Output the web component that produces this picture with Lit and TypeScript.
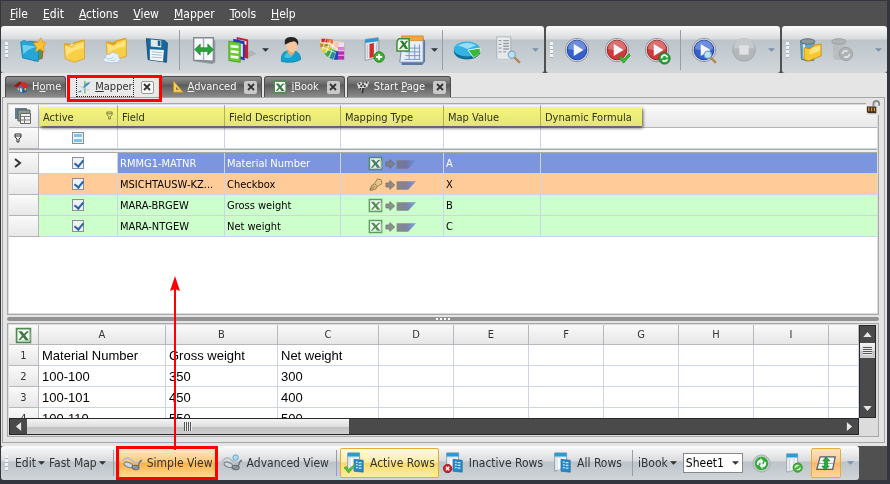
import { LitElement, html, css, svg, nothing } from "lit";
import { customElement, property } from "lit/decorators.js";
import { classMap } from "lit/directives/class-map.js";

const excelMark = svg`
  <path d="M1.500 1.500h13v13h-13z" fill="#fff" stroke="#4f8a50" stroke-width="1.600"/>
  <path d="M11 5h3v8h-8" fill="none" stroke="#b5cfb5"/>
  <path d="M3 4h3.500l2 2.600L11 4h2L9.600 8l3.600 4.500H9.800L7.600 9.600 5 12.500H3L6.500 8.200z" fill="#3d7c40"/>`;

const cover = svg`
  <path d="M9 5h14v18H9z" fill="#f2f5f7" stroke="#9aa3ab"/>
  <path d="M7 4l15-2v22l-15 4z" fill="#e3e8ec" stroke="#8f989f"/>
  <path d="M7 4l15-2v4L7 8z" fill="#2f97d0"/>`;

const rowsIcon = svg`
  <path d="M4 1h13v15l-13 5z" fill="#e9eef2" stroke="#8c99a3"/>
  <path d="M4 1h13v4H4z" fill="#2a9bd6"/>
  <path d="M7 6h3v13l-3 1z" fill="#fff" stroke="#bcc5cb" stroke-width=".5"/>
  <path d="M11 8l10 1v13l-10-1z" fill="#2588c8" stroke="#1b6da6" stroke-width=".7"/>
  <path d="M13 11h2M16 11.500h3M13 14h2M16 14.500h3M13 17h2M16 17.500h3" stroke="#c9ecff" stroke-width="1.400"/>`;

const ball = (fill: string, rim: string) => svg`
  <circle cx="16" cy="16" r="12.500" fill="#d7dbe2" stroke="#8e949d"/>
  <circle cx="16" cy="16" r="10.500" fill="${fill}" stroke="${rim}"/>
  <path d="M6.500 15a9.500 9.500 0 0 1 19 0q-9 3-19 0z" fill="#fff" opacity=".28"/>
  <path d="M12.500 9.500v13L23 16z" fill="#f4f6fb"/>`;

const lens = svg`
  <path d="M23 24l5 5" stroke="#b88550" stroke-width="2.600" stroke-linecap="round"/>
  <circle cx="20" cy="21" r="3.800" fill="#b9e0f5" stroke="#7ca6c0" stroke-width="1.200"/>`;

const glasses = svg`
  <path d="M1 8q4-5 8-3l7 5 7-2" fill="none" stroke="#b9bec2" stroke-width="2"/>
  <path d="M23 7q-3 1-4 7" fill="none" stroke="#6f757b" stroke-width="1.600"/>
  <ellipse cx="8" cy="12" rx="5" ry="2.600" transform="rotate(22 8 12)" fill="#d3d8dc" stroke="#7d8389" stroke-width="1.200"/>
  <ellipse cx="16" cy="15" rx="4" ry="2.400" transform="rotate(12 16 15)" fill="#8f969c" stroke="#686e74" stroke-width="1.200"/>`;

const icons: Record<string, [string, unknown]> = {
  collection: ["0 0 32 32", svg`
    <path d="M14 6l15 1-2 19-10 3z" fill="#c0562c"/><path d="M10 6l16 1v18l-8 4z" fill="#49a04b"/>
    <path d="M2 7l4-2 4 2 3-1 10 3-1 20L4 25z" fill="#25a5d8" stroke="#1580b2"/>
    <path d="M4 10l17 2q-10 2-16 9z" fill="#8fe2f7" opacity=".7"/>
    <path d="M25 2l2 5 4 1-3 4 1 6-5-3-5 3 1-6-4-4 6-1z" fill="#fdc22d" stroke="#e59012" stroke-width=".7"/>`],
  folder: ["0 0 32 32", svg`
    <path d="M5 8l8 1 3-2 11-3v21l-12 4z" fill="#e2a51a"/>
    <path d="M8 11l18-5v6L12 15z" fill="#fff6cd"/>
    <path d="M5 9l8 3 2-1 2-3 11-3v21l-12 4L6 26z" fill="#f9cf45" stroke="#d49a1c" stroke-width=".8"/>
    <path d="M6 11l8 3 3-3 10-4v7q-12 1-20 9z" fill="#fff0a0" opacity=".6"/>`],
  cloudFolder: ["0 0 32 32", svg`
    <path d="M6 6l8 1 3-2 11-3v19l-12 4z" fill="#e2a51a"/>
    <path d="M6 7l8 3 2-1 2-3 11-3v20l-12 4L7 23z" fill="#f9cf45" stroke="#d49a1c" stroke-width=".8"/>
    <path d="M7 9l8 3 3-3 10-4v7q-12 1-20 8z" fill="#fff0a0" opacity=".6"/>
    <path d="M4 29q-3-3 1-4 0-5 5-4 3-4 7-1 4 0 3 4 4 3-1 6-8 2-15-1z" fill="#e6f1fa" stroke="#a9c6dc"/>
    <path d="M6 25q4 3 8-1M11 28q4 1 6-2" fill="none" stroke="#a9c6dc"/>`],
  save: ["0 0 32 32", svg`
    <path d="M5 3l21 2 3 3-1 22L7 27z" fill="#17679f" stroke="#0f4b78"/>
    <path d="M10 4l12 1v8l-12-1z" fill="#dfe9f0"/><path d="M18 5l3 .3v6l-3-.3z" fill="#1b5f90"/>
    <path d="M9 15l16 1-1 13-15-2z" fill="#f5f8fa"/><path d="M11 18l12 1M11 21l12 1M11 24l12 1" stroke="#9db3c2"/>`],
  swap: ["0 0 32 32", svg`
    <path d="M5 4h20l3 2v23l-3 2-20-3z" fill="#8c969d"/>
    <path d="M5 3h21v25l-21-1z" fill="#f8f9fa" stroke="#818b92" stroke-width="1.500"/><path d="M15.500 3v24" stroke="#a7afb5" stroke-width="1.500"/>
    <path d="M6 15.500l6-6v4h8v-4l6 6-6 6v-4h-8v4z" fill="#29a33a" stroke="#12762a" stroke-width=".6"/>`],
  lists: ["0 0 34 32", svg`
    <path d="M18 28l16-8-8-4z" fill="#9ea7ad" opacity=".6"/>
    <path d="M11 1l13 3v22l-13-4z" fill="#c3222d"/><path d="M13 4l9 2v4l-9-2z" fill="#fff"/>
    <path d="M7 3l13 3v22L7 24z" fill="#2b35bd"/><path d="M9 7l9 2v15l-9-2z" fill="#dfe2ff"/>
    <path d="M2 6l13 2v22L2 28z" fill="#6ecb37" stroke="#3f9e1b"/>
    <path d="M4 10l9 1v3l-9-1zM4 16l9 1v3l-9-1zM4 22l9 1v3l-9-1z" fill="#f3fff0"/>`],
  person: ["0 0 32 32", svg`
    <path d="M5 29q-1-11 7-12h8q7 2 7 10-9 5-22 2z" fill="#12a1cc" stroke="#0e7ba3" stroke-width=".8"/>
    <path d="M12 15v4l4 4 4-4v-4z" fill="#e7a877"/><path d="M10 7q0-4 7-4t6 6q0 9-6 10-6-2-7-12z" fill="#f6c79c"/>
    <path d="M9 10Q7 1 16 1q10 0 8 10-2-5-5-5-5 1-10 4z" fill="#26221f"/>
    <path d="M8 24q2-5 5-5l3 4 4-4q-4 9-12 5z" fill="#6fd7ef" opacity=".6"/>`],
  swatches: ["0 0 32 32", svg`
    <path d="M2 10l4 8 7 7 8 2 9-1V7L16 5 3 3z" fill="#e8d9b0"/>
    <path d="M4 3l6 0 1 4-7 0z" fill="#d11f1b"/><path d="M10 3l7 1 1 5-7-2z" fill="#ef6c2d"/>
    <path d="M2 8h9l3 3-11 2z" fill="#b98f2b"/><path d="M3 14l10-2 3 2-10 5z" fill="#d8ce2a"/>
    <path d="M7 20l9-6 2 2-7 8z" fill="#3fa63c"/><path d="M12 24l6-8 3 1-4 10z" fill="#1f8f9a"/>
    <path d="M18 27l3-10 3 0-1 10z" fill="#2743b5"/><path d="M23 8h7v19h-7z" fill="#b32cb4"/>
    <path d="M17 5l6 3v6l-6-3z" fill="#f5c2b5"/><path d="M23 8h7v5h-7z" fill="#f4dcf4"/><path d="M23 13h7v4h-7z" fill="#d988da"/>
    <path d="M3 8l11 1 9 7M5 13l15 6M9 3l-4 13M14 5l-5 15M19 7l-6 17M23 17h7M23 22h7" stroke="#fff" stroke-width=".8" fill="none"/>`],
  sheetAdd: ["0 0 32 32", svg`${cover}
    <path d="M12 9l5-1v16l-5 1z" fill="#cf2e2c"/><path d="M9.500 10v15M20 8v14" stroke="#b6bfc5"/>
    <circle cx="23" cy="24" r="6" fill="#3cb02f" stroke="#25801c"/><path d="M23 20.500v7M19.500 24h7" stroke="#fff" stroke-width="2.200"/>`],
  excelCal: ["0 0 32 32", svg`
    <path d="M7 4h22l2 2v22l-3 4H6z" fill="#5b78a5"/><path d="M7 4h22v25H4z" fill="#e7effa" stroke="#7189b0"/>
    <path d="M6 1h23v5H6z" fill="#f3a73a" stroke="#c77c1c" stroke-width=".7"/>
    <path d="M12 14h14M10 18h16M10 22h16M9 26h17M14 18v8M20 10v16M25 10v16" stroke="#7393c7"/>
    <path d="M3 4h11v13H1V7z" fill="#f7fbf6" stroke="#3f8a3c" stroke-width="1.600"/>
    <path d="M4 6h3l2 2.500L11 6h2l-3 4 3 5h-3l-2-3L5 15H3l4-5z" fill="#2c7d2d"/>`],
  pie: ["0 0 32 32", svg`
    <path d="M2 15v4q3 7 14 7t14-7v-4z" fill="#0d6f9e"/><ellipse cx="16" cy="15" rx="14" ry="8" fill="#34b2e2"/>
    <path d="M5 12q10-7 21-1l-10 4q-7-4-11-3z" fill="#aee9fb" opacity=".8"/>
    <path d="M17 16l13-2q2 6-7 10z" fill="#33b83a" stroke="#eafbea"/><path d="M23 24q6-3 7-7v3l-7 5z" fill="#1d8a26"/>`],
  preview: ["0 0 32 32", svg`
    <g opacity=".75"><path d="M4 2h15v24H4z" fill="#f1f3f4" stroke="#9ca4aa"/><path d="M2 26h18v3H2z" fill="#d0d5d8"/>
    <path d="M6 6h3M6 10h3M6 14h3M6 18h3M11 6h6M11 9h6M11 12h6M11 15h6M11 18h3" stroke="#8d959b" stroke-width="1.500"/></g>${lens}`],
  play: ["0 0 32 32", ball("#3560cf", "#1d3f9c")],
  playCheck: ["0 0 32 32", svg`${ball("#cf3a3a", "#982020")}<path d="M18 24l3-1 2 3 6-6 1 2-7 8z" fill="#3fb836" stroke="#278b20" stroke-width=".8"/>`],
  playLoop: ["0 0 32 32", svg`${ball("#cf3a3a", "#982020")}<circle cx="24" cy="25" r="6" fill="#2ca63a" stroke="#16752a"/><path d="M21 25a3 3 0 0 1 6-1M27 26a3 3 0 0 1-5 1" stroke="#fff" stroke-width="1.800" fill="none"/>`],
  playFind: ["0 0 32 32", svg`${ball("#3560cf", "#1d3f9c")}${lens}`],
  stop: ["0 0 32 32", svg`<circle cx="16" cy="16" r="12" fill="#b4b7ba" stroke="#a2a6a9"/><path d="M5 14a11 11 0 0 1 22 0z" fill="#c6c9cb"/><path d="M11 11h10v10H11z" fill="#dfe1e3"/>`],
  binFolder: ["0 0 28 28", svg`
    <path d="M4 4h15v22q-8 2-14-1z" fill="#5fa9c9" stroke="#5b717d"/><path d="M8 8v16" stroke="#eefaff" stroke-width="2"/>
    <ellipse cx="12" cy="5" rx="8" ry="3" fill="#8b979f" stroke="#5d6971"/>
    <path d="M8 12l6 1 3-1 2-3 8-1v13l-14 6-5-2z" fill="#f8c92f" stroke="#c58f14"/><path d="M14 15l3-3 9-2v5l-12 5z" fill="#fff0a2" opacity=".7"/>`],
  binLoop: ["0 0 28 28", svg`
    <path d="M4 4h14l-1 21q-8 2-12-1z" fill="#b9bdc0"/><ellipse cx="11" cy="5" rx="8" ry="3" fill="#b0b4b7" stroke="#999da0"/>
    <circle cx="19" cy="19" r="7.500" fill="#aeb2b5" stroke="#9b9fa2"/><path d="M15 19q1-5 6-3M23 19q-1 5-6 3" stroke="#e1e3e5" stroke-width="2" fill="none"/>`],
  home: ["0 0 16 16", svg`
    <path d="M3 8l4-3 8 2v6l-6 2-6-3z" fill="#2b7fc6"/>
    <path d="M10 9l5-2v6l-5 2z" fill="#1c5fa0"/><path d="M0 7l6-5 8 1 2 5-5 1-4-3-4 3z" fill="#d8281f"/>
    <path d="M0 7l6-5 3 1-5 5z" fill="#8d1712"/><path d="M4 9h2v3H4zM12 9h2v3h-2z" fill="#f0a832"/><path d="M7 9l2 1v4l-2-1z" fill="#e8edf2"/>`],
  mapper: ["0 0 16 16", svg`<path d="M9 1v14" stroke="#3fae4a" stroke-width="1.200"/><path d="M1 13q4 0 6-5t8-6q-1 4-6 6t-4 5q-2 2-4 0z" fill="#4f93c3"/><path d="M3 7l8 4 3 0" fill="none" stroke="#a6cbe2"/>`],
  ruler: ["0 0 16 16", svg`<path d="M4 1v13h11z" fill="#f6cf55" stroke="#c98d1e"/><path d="M7 8v3h3z" fill="#5f5f5f"/>`],
  excel: ["0 0 16 16", excelMark],
  flag: ["0 0 16 16", svg`<path d="M1 4l4-2 3 2 3-2 4 0-2 6-4 1-2 3-4-2z" fill="#ddd"/><path d="M3 3h2v2H3zM7 4h2v2H7zM11 2h2v2h-2zM5 6h2v2H5zM9 6h2v2H9zM4 9h2v2H4zM7 9l2 0-1 6H7z" fill="#222"/>`],
  glasses: ["0 0 24 20", glasses],
  glassesPlus: ["0 0 24 20", svg`${glasses}<circle cx="16" cy="4" r="3" fill="#a6dcf5" stroke="#5f9dbd"/>`],
  rowsOn: ["0 0 24 24", svg`${rowsIcon}<path d="M0 17l3-1 2 3 6-5 1 1-7 8z" fill="#58c23f" stroke="#35942a" stroke-width=".7"/>`],
  rowsOff: ["0 0 24 24", svg`${rowsIcon}<circle cx="5" cy="18" r="4.500" fill="#d2232a" stroke="#94141a"/><path d="M3.200 16.200l3.600 3.600M6.800 16.200l-3.600 3.600" stroke="#fff" stroke-width="1.500"/>`],
  rows: ["0 0 24 24", rowsIcon],
  refresh: ["0 0 20 20", svg`<circle cx="10" cy="10" r="9" fill="#c5ccc9" stroke="#a3ada8"/><circle cx="10" cy="10" r="7" fill="#35a83e"/><path d="M5 11q0-5 4-5V4l3 4-3 3V9q-2 0-2 3zM15 9q0 5-4 5v2l-3-4 3-3v2q2 0 2-3z" fill="#f2fff2"/>`],
  sheetLoop: ["0 0 24 24", svg`<path d="M4 2h12v17l-12 3z" fill="#eef1f3" stroke="#97a1a8"/><path d="M4 2h12v4H4z" fill="#2a9bd6"/><path d="M7 7v13M12 7v12" stroke="#c5ccd1"/><circle cx="16" cy="17" r="5" fill="#46b93b" stroke="#2a8a23"/><path d="M13 17q1-3 4-2M19 17q-1 3-4 2" stroke="#fff" stroke-width="1.400" fill="none"/>`],
  fit: ["0 0 24 20", svg`<path d="M5 2h18l-3 15H1z" fill="#f4f6f7" stroke="#555d63" stroke-width="1.500"/><path d="M3 10h18" stroke="#8d969c"/><path d="M12 2l5 5h-3v6h2l-5 5-4-5h3V7H8z" fill="#2aa83a" stroke="#137427" stroke-width=".6"/>`],
  grid: ["0 0 18 18", svg`<path d="M1 1h12v11H1z" fill="#697a98"/><path d="M4 3h12v11H4z" fill="#8ba08c" stroke="#55635a"/><path d="M6.500 6.500h10v10h-10z" fill="#f1f1f1" stroke="#666"/><path d="M6 9.500h11M10.500 10v7M7 13h10" stroke="#777"/>`],
  filter: ["0 0 8 10", svg`<path d="M1 1h6v3L5 6v3H3V6L1 4zM1 3h6" fill="none" stroke="currentColor"/>`],
  arrowMap: ["0 0 32 12", svg`<path d="M1 4h4V1.500L10 6l-5 4.500V8H1z" fill="#808080" stroke="#666"/><path d="M12 2h20l-8 9H12z" fill="url(#fade)"/><defs><linearGradient id="fade"><stop offset="0" stop-color="#777"/><stop offset=".5" stop-color="#70709c"/><stop offset="1" stop-color="#6a90e8"/></linearGradient></defs>`],
  pin: ["0 0 16 16", svg`<path d="M2 14l2-5 3-2 3 3-2 3-4 1z" fill="#d3b56f" stroke="#7a6a48"/><path d="M7 7l3-5 4 1 1 4-5 3z" fill="#e2c481" stroke="#857350"/><path d="M2 14l5-4" stroke="#7a6a48"/>`],
  lock: ["0 0 16 16", svg`<path d="M8 7V4q0-3 3-3t3 3v2" fill="none" stroke="#8b8b8b" stroke-width="2"/><path d="M1 7h10v7H3q-2 0-2-2z" fill="#3b2d22"/><path d="M3 8v4M6 8v4M9 8v4" stroke="#e39a33" stroke-width="1.400"/>`],
  left: ["0 0 8 10", svg`<path d="M7 0v10L1 5z" fill="#e6e6e6"/>`],
  right: ["0 0 8 10", svg`<path d="M1 0v10l6-5z" fill="#e6e6e6"/>`],
  up: ["0 0 10 6", svg`<path d="M0 6h10L5 0z" fill="#e6e6e6"/>`],
  down: ["0 0 10 6", svg`<path d="M0 0h10L5 6z" fill="#e6e6e6"/>`],
  caret: ["0 0 8 4", svg`<path d="M0 0h8L4 4z" fill="currentColor"/>`],
  cross: ["0 0 8 8", svg`<path d="M1 1l6 6M7 1L1 7" stroke="currentColor" stroke-width="1.800"/>`],
  current: ["0 0 8 10", svg`<path d="M1 1l5 4-5 4" fill="none" stroke="#333" stroke-width="2"/>`],
};

@customElement("ui-icon")
class UiIcon extends LitElement {
  @property() name = "";
  @property({ type: Number }) size = 16;
  static styles = css`
    :host { display: block; flex: none; }
    svg { display: block; }
  `;
  render() {
    const [box, art] = icons[this.name];
    const [, , w, h] = box.split(" ").map(Number);
    return html`<svg viewBox=${box} width=${this.size} height=${Math.round((this.size * h) / w)} aria-hidden="true">${art}</svg>`;
  }
}

const menu = [["F", "ile"], ["E", "dit"], ["A", "ctions"], ["V", "iew"], ["M", "apper"], ["T", "ools"], ["H", "elp"]];

const tabs = [
  { icon: "home", pre: "H", key: "o", post: "me", close: false },
  { icon: "mapper", pre: "", key: "M", post: "apper", close: true, active: true },
  { icon: "ruler", pre: "", key: "A", post: "dvanced", close: true },
  { icon: "excel", pre: "", key: "i", post: "Book", close: true },
  { icon: "flag", pre: "Start ", key: "P", post: "age", close: true },
];

const mappings = [
  { field: "RMMG1-MATNR", text: "Material Number", source: "excel", value: "A", tone: "selected" },
  { field: "MSICHTAUSW-KZ...", text: "Checkbox", source: "pin", value: "X", tone: "orange" },
  { field: "MARA-BRGEW", text: "Gross weight", source: "excel", value: "B", tone: "green" },
  { field: "MARA-NTGEW", text: "Net weight", source: "excel", value: "C", tone: "green" },
];

const letters = ["A", "B", "C", "D", "E", "F", "G", "H", "I"];
const sheet = [
  ["Material Number", "Gross weight", "Net weight"],
  ["100-100", "350", "300"],
  ["100-101", "450", "400"],
  ["100-110", "550", "500"],
];

@customElement("app-root")
class AppRoot extends LitElement {
  static styles = css`
    * { box-sizing: border-box; }
    :host {
      display: flex; flex-direction: column; min-height: 100vh; box-sizing: border-box;
      padding: 1px 3px 4px 1px; background: #34363f; color: #333;
      font: 11px/14px "DejaVu Sans Condensed", "DejaVu Sans", sans-serif;
    }
    button { font: inherit; color: inherit; border: 0; padding: 0; background: none; display: flex; align-items: center; justify-content: center; flex: none; white-space: nowrap; }
    u { text-underline-offset: 1px; }

    .menu { display: flex; gap: 15px; padding: 0 9px; height: 25px; background: #505050; color: #fff; font-size: 12px; flex: none; }

    .toolbars { display: flex; gap: 2px; background: #505050; flex: none; }
    .toolbar {
      display: flex; align-items: center; height: 47px; padding: 0 4px; border-radius: 3px;
      background: linear-gradient(#fbfbfb 0, #d8dadd 13px, #bcc4cb 14px, #c6cdd2 30px, #d2d7da);
    }
    .toolbar.rest { flex: 1; min-width: 0; }
    .grip { width: 3px; height: 16px; flex: none; background: repeating-linear-gradient(#f0f2f3 0 3px, #aab1b8 3px 4px); margin-right: 4px; }
    .sep { width: 1px; height: 40px; background: #969ea6; flex: none; margin: 0 3px; }
    .tool { width: 41px; height: 40px; }
    .run .tool { width: 40px; }
    .tool.narrow { width: 36px; }
    .rest .tool { width: 32px; }
    .caret { width: 10px; height: 20px; }
    .more { color: #7d8fae; margin-left: 2px; }
    .rest .more { margin-left: auto; }

    .work { flex: 1; display: flex; flex-direction: column; background: #e5e5e5; padding: 3px 2px 3px 1px; }
    .tabs { display: flex; gap: 2px; padding-left: 3px; height: 21px; flex: none; }
    .tab {
      position: relative; display: flex; align-items: center; gap: 4px; padding: 0 4px 0 8px; color: #f4f4f4;
      background: linear-gradient(#8d8d8d, #6a6a6a 7px, #5c5c5c 8px, #8b8b8b);
      border: 1px solid #4c4c4c; border-bottom: 0; border-radius: 3px 3px 0 0;
    }
    .tab.active { background: #e9e9e9; border-color: #e9e9e9; color: #333; }
    .tab.active::after { content: ""; position: absolute; inset: -2px -4px -5px -2px; border: 3px solid #f00; z-index: 2; }
    .name { height: 18px; }
    .active .name { outline: 1px dotted #222; }
    .tab .label { display: flex; align-items: center; gap: 4px; }
    .close { width: 13px; height: 13px; margin-left: 4px; background: #c9c9c9; color: #333; border-radius: 2px; }
    .active .close { background: #f7f7f7; border: 1px solid #999; }

    .frame { flex: 1; display: flex; flex-direction: column; border: 1px solid #a5a5a5; padding: 5px 5px 5px 4px; position: relative; }
    .lock { position: absolute; right: 3px; top: 2px; background: #e5e5e5; }
    .pane { border: 1px solid #a8a8a8; padding: 1px; background: #dcdcdc; }
    .grid { flex: 1; display: flex; }
    .canvas { background: #fff; flex: 1; min-width: 0; position: relative; }
    .mark { position: absolute; top: 2px; left: 31px; width: 602px; height: 19px; background: #fbfb80; mix-blend-mode: multiply; box-shadow: 1px 2px 3px #555; }
    table { border-spacing: 0; table-layout: fixed; width: 100%; }
    th, td { padding: 0; text-align: left; font-weight: normal; overflow: hidden; white-space: nowrap; }
    .map td { height: 21px; padding: 1px 2px 0; border: solid #ccd5e6; border-width: 0 1px 1px 0; color: #000; }
    .map th { height: 23px; padding: 3px 4px 0; border: solid #b4b4b4; border-width: 0 1px 1px 0; background: linear-gradient(#fafafa, #e8e8e8); }
    .map tr > *:last-child { border-right: 0; }
    .map tbody th { height: 21px; padding: 0 5px; }
    .map .gap td { height: 4px; padding: 0; background: #eee; border: solid #aaa; border-width: 1px 0; }
    .map .selected td { background: #7b95de; color: #fff; }
    .map .selected td.tick { background: #fff; }
    .map .tick { padding-top: 0; }
    .orange td { background: #ffcc99; }
    .green td { background: #ccffcc; }
    .map .corner { padding: 0 5px; }
    .split { display: flex; justify-content: space-between; }
    .split ui-icon { color: #777; }
    .flow { display: flex; justify-content: center; align-items: center; gap: 2px; opacity: 0.85; }
    .tick input { appearance: none; display: block; width: 12px; height: 12px; margin: 0 auto; border: 1px solid #8a8f96; background: #eef1f5; position: relative; }
    .tick input:checked::before { content: ""; position: absolute; left: 3px; top: 0; width: 4px; height: 7px; border: solid #2a64ad; border-width: 0 2px 2px 0; transform: rotate(40deg); }
    .tick input:indeterminate::before { content: ""; position: absolute; inset: 1px; background: linear-gradient(#7fc4ee 3px, #e8f7ff 3px 5px, #7fc4ee 5px); }
    .c30 { width: 30px; } .c79 { width: 79px; } .c107 { width: 107px; } .c116 { width: 116px; } .c103 { width: 103px; } .c97 { width: 97px; }
    .c127 { width: 127px; } .c112 { width: 112px; } .c101 { width: 101px; } .c75 { width: 75px; }

    .splitter { height: 4px; margin: 2px 0; background: #939393; display: flex; justify-content: center; align-items: center; flex: none; border-radius: 2px; }
    .splitter::before { content: ""; width: 14px; height: 2px; background: repeating-linear-gradient(90deg, #fff 0 2px, transparent 2px 4px); }

    .book { display: grid; grid-template: 93px 17px / minmax(0, 1fr) 17px; flex: none; padding: 1px 2px 1px 1px; }
    .cells { overflow: hidden; background: #fff; }
    .xls th { height: 20px; padding-top: 1px; text-align: center; border: solid #b8b8b8; border-width: 0 1px 1px 0; background: linear-gradient(#fafafa, #e6e6e6); }
    .xls tbody th { height: 21px; }
    .xls td { height: 21px; padding: 2px 3px 0; border: solid #ccd5e6; border-width: 0 1px 1px 0; font: 13px/16px "Liberation Sans", Arial, sans-serif; color: #000; }
    .xls th ui-icon { margin-left: 6px; }
    .bar { display: flex; background: #4a4a4a; border: 1px solid #26282c; }
    .bar.v { flex-direction: column; align-items: stretch; }
    .bar button { width: 17px; height: 15px; }
    .bar.v button { width: 15px; height: 17px; }
    .bar button:last-child { margin-left: auto; }
    .bar.v button:last-child { margin: auto 0 0; }
    .thumb { width: 322px; background: linear-gradient(#f5f5f5, #dcdcdc 8px, #c2c2c2 8px, #cfcfcf); display: flex; align-items: center; justify-content: center; }
    .thumb::before { content: ""; width: 8px; height: 9px; background: repeating-linear-gradient(90deg, #555 0 1px, #eee 1px 2px); }
    .v .thumb { width: auto; height: 15px; }
    .v .thumb::before { width: 9px; height: 8px; background: repeating-linear-gradient(#555 0 1px, #eee 1px 2px); }

    .foot { display: flex; background: #505050; flex: none; padding-right: 28px; }
    .foot .toolbar { flex: 1; min-width: 0; height: 34px; font-size: 12px; background: linear-gradient(#fbfbfb, #d9dbde 15px, #bcc4cb 16px, #d0d5d8); border-radius: 3px; }
    .foot .sep { height: 26px; margin: 0 3px; }
    .drop { gap: 2px; margin-right: 4px; }
    .foot .grip { margin-right: 7px; }
    .view { height: 30px; padding: 0 3px; gap: 4px; border: 1px solid transparent; border-radius: 2px; position: relative; }
    .view.hot { background: linear-gradient(#fdebc9, #fcc878 13px, #fbb04c 14px, #fedc8e); }
    .view.hot::before { content: ""; position: absolute; inset: -3px -2px; border: 3px solid #f00; }
    .pointer { position: absolute; bottom: 27px; left: 51px; z-index: 3; }
    .view.on { background: linear-gradient(#fffbe3, #fcecaa 13px, #f8da68 14px, #fbeea4); border-color: #e9ab35; }
    .view.on.warm { background: linear-gradient(#fde3c3, #fbc88e 13px, #f9b56b 14px, #fdd99d); }
    .tail { display: flex; align-items: center; flex: 1; gap: 2px; margin-left: 3px; }
    .pick { display: grid; align-items: center; flex: none; margin-right: 2px; }
    .pick > * { grid-area: 1 / 1; }
    .pick ui-icon { justify-self: end; margin-right: 4px; pointer-events: none; }
    select { appearance: none; font: inherit; width: 60px; height: 20px; border: 1px solid #888; padding: 0 2px; border-radius: 0; color: #000; background: #fff; }
    .foot .icon { width: 30px; height: 30px; padding: 0; margin: 0; }
    .foot .more { margin-left: auto; }
  `;

  private tool(name: string, narrow = false, size = 30) {
    return html`<button class=${classMap({ tool: true, narrow })} aria-label=${name}><ui-icon name=${name} size=${size}></ui-icon></button>`;
  }

  private caret(label: string, more = false) {
    return html`<button class=${classMap({ caret: true, more })} aria-label=${label}><ui-icon name="caret" size="7"></ui-icon></button>`;
  }

  private drop(label: string) {
    return html`<button class="drop">${label}<ui-icon name="caret" size="7"></ui-icon></button>`;
  }

  private view(name: string, label: string, on = false) {
    return html`<button class=${classMap({ view: true, on })}><ui-icon name=${name} size="22"></ui-icon>${label}</button>`;
  }

  render() {
    return html`
      <nav class="menu">${menu.map(([k, rest]) => html`<button><span><u>${k}</u>${rest}</span></button>`)}</nav>
      <div class="toolbars">
        <div class="toolbar">
          <span class="grip"></span>
          ${["collection", "folder", "cloudFolder", "save"].map((n) => this.tool(n, false, 28))}
          <span class="sep"></span>
          ${this.tool("swap")}${this.tool("lists", true)}${this.caret("Lists menu")}
          ${["person", "swatches", "sheetAdd"].map((n) => this.tool(n, false, 28))}${this.tool("excelCal", true)}${this.caret("Excel menu")}
          <span class="sep"></span>
          ${this.tool("pie")}${this.tool("preview")}${this.caret("More", true)}
        </div>
        <div class="toolbar run">
          <span class="grip"></span>
          ${["play", "playCheck", "playLoop"].map((n) => this.tool(n))}
          <span class="sep"></span>
          ${this.tool("playFind")}${this.tool("stop")}${this.caret("More", true)}
        </div>
        <div class="toolbar rest">
          <span class="grip"></span>
          ${this.tool("binFolder", false, 25)}${this.tool("binLoop", false, 25)}${this.caret("More", true)}
        </div>
      </div>

      <main class="work">
        <div class="tabs">
          ${tabs.map((t) => html`
            <div class=${classMap({ tab: true, active: !!t.active })}>
              <button class="name"><span class="label"><ui-icon name=${t.icon} size="14"></ui-icon><span>${t.pre}<u>${t.key}</u>${t.post}</span></span></button>
              ${t.close ? html`<button class="close" aria-label="Close"><ui-icon name="cross" size="8"></ui-icon></button>` : nothing}
            </div>`)}
        </div>
        <div class="frame">
          <div class="pane grid"><div class="canvas">
            <table class="map">
              <colgroup><col class="c30"><col class="c79"><col class="c107"><col class="c116"><col class="c103"><col class="c97"><col></colgroup>
              <thead><tr>
                <th class="corner"><ui-icon name="grid" size="18"></ui-icon></th>
                <th><div class="split">Active<ui-icon name="filter" size="7"></ui-icon></div></th>
                <th>Field</th><th>Field Description</th><th>Mapping Type</th><th>Map Value</th><th>Dynamic Formula</th>
              </tr></thead>
              <tbody>
                <tr><th><ui-icon name="filter" size="8"></ui-icon></th><td class="tick"><input type="checkbox" aria-label="Filter active" .indeterminate=${true}></td><td></td><td></td><td></td><td></td><td></td></tr>
                <tr class="gap"><td colspan="7"></td></tr>
                ${mappings.map((m) => html`
                  <tr class=${m.tone}>
                    <th>${m.tone === "selected" ? html`<ui-icon name="current" size="8"></ui-icon>` : nothing}</th>
                    <td class="tick"><input type="checkbox" aria-label=${"Active " + m.field} checked></td>
                    <td>${m.field}</td><td>${m.text}</td>
                    <td><div class="flow"><ui-icon name=${m.source} size="15"></ui-icon><ui-icon name="arrowMap" size="31"></ui-icon></div></td>
                    <td>${m.value}</td><td></td>
                  </tr>`)}
              </tbody>
            </table>
            <div class="mark"></div>
          </div></div>
          <div class="splitter"></div>
          <div class="pane book">
            <div class="cells">
              <table class="xls">
                <colgroup><col class="c30"><col class="c127"><col class="c112"><col class="c101">${letters.slice(3).map(() => html`<col class="c75">`)}<col></colgroup>
                <thead><tr><th><ui-icon name="excel" size="17"></ui-icon></th>${letters.map((l) => html`<th>${l}</th>`)}<th></th></tr></thead>
                <tbody>${sheet.map((r, i) => html`<tr><th>${i + 1}</th>${r.map((c) => html`<td>${c}</td>`)}${letters.slice(2).map(() => html`<td></td>`)}</tr>`)}</tbody>
              </table>
            </div>
            <div class="bar v">
              <button aria-label="Scroll up"><ui-icon name="up" size="9"></ui-icon></button><div class="thumb"></div>
              <button aria-label="Scroll down"><ui-icon name="down" size="9"></ui-icon></button>
            </div>
            <div class="bar">
              <button aria-label="Scroll left"><ui-icon name="left" size="7"></ui-icon></button><div class="thumb"></div>
              <button aria-label="Scroll right"><ui-icon name="right" size="7"></ui-icon></button>
            </div>
          </div>
          <ui-icon class="lock" name="lock" size="15"></ui-icon>
        </div>
      </main>

      <footer class="foot"><div class="toolbar">
        <span class="grip"></span>
        ${this.drop("Edit")}${this.drop("Fast Map")}
        <span class="sep"></span>
        <button class="view hot"><ui-icon name="glasses" size="22"></ui-icon>Simple View
          <svg class="pointer" width="12" height="174" viewBox="0 0 12 174" aria-hidden="true"><path d="M6 0l5 15-5-2-5 2z" fill="#f00"/><path d="M6 10v164" stroke="#f00" stroke-width="2"/></svg>
        </button>
        ${this.view("glassesPlus", "Advanced View")}
        <span class="sep"></span>
        ${this.view("rowsOn", "Active Rows", true)}${this.view("rowsOff", "Inactive Rows")}${this.view("rows", "All Rows")}
        <div class="tail">
          <span class="sep"></span>
          ${this.drop("iBook")}
          <span class="pick"><select aria-label="Sheet"><option>Sheet1</option></select><ui-icon name="caret" size="7"></ui-icon></span>
          <button class="view icon" aria-label="Refresh"><ui-icon name="refresh" size="19"></ui-icon></button>
          <button class="view icon" aria-label="Reload sheet"><ui-icon name="sheetLoop" size="22"></ui-icon></button>
          <button class="view icon on warm" aria-label="Fit height"><ui-icon name="fit" size="20"></ui-icon></button>
          ${this.caret("More", true)}
        </div>
      </div></footer>
    `;
  }
}
